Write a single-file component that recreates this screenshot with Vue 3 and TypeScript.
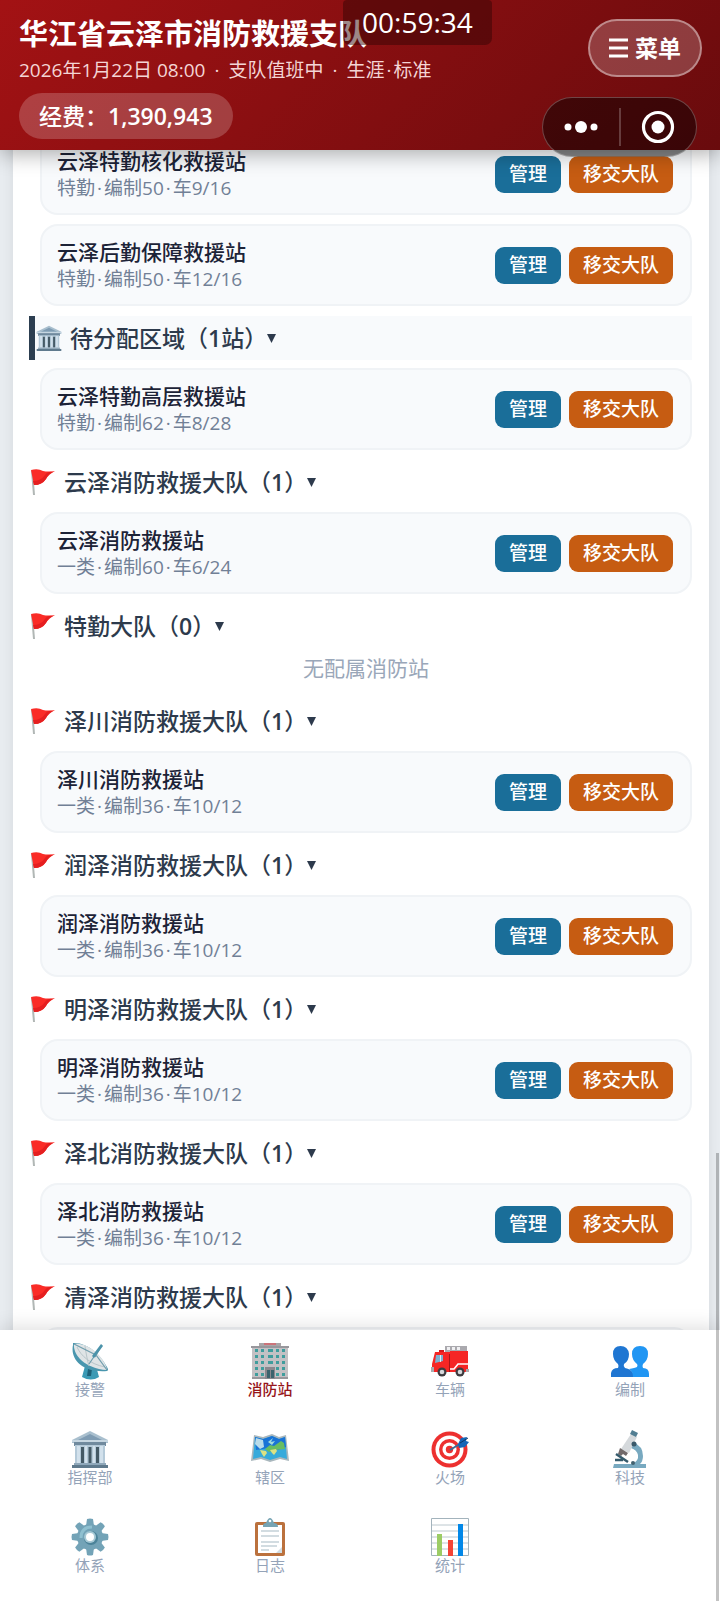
<script setup lang="ts">
import { ref } from 'vue'

interface Station {
  name: string
  kind: string
  staff: number
  vehicles: string
}

interface Group {
  title: string
  count: string
  unit?: string
  pending?: boolean
  stations: Station[]
}

const leading: Station[] = [
  { name: '云泽特勤核化救援站', kind: '特勤', staff: 50, vehicles: '9/16' },
  { name: '云泽后勤保障救援站', kind: '特勤', staff: 50, vehicles: '12/16' },
]

const brigade = (place: string, staff = 36, vehicles = '10/12'): Group => ({
  title: `${place}消防救援大队`,
  count: '1',
  stations: [{ name: `${place}消防救援站`, kind: '一类', staff, vehicles }],
})

const groups: Group[] = [
  { title: '', count: '', stations: leading },
  {
    title: '待分配区域',
    count: '1',
    unit: '站',
    pending: true,
    stations: [{ name: '云泽特勤高层救援站', kind: '特勤', staff: 62, vehicles: '8/28' }],
  },
  brigade('云泽', 60, '6/24'),
  { title: '特勤大队', count: '0', stations: [] },
  brigade('泽川'),
  brigade('润泽'),
  brigade('明泽'),
  brigade('泽北'),
  brigade('清泽'),
]

const tabs = [
  { id: 'dish', label: '接警' },
  { id: 'office', label: '消防站' },
  { id: 'truck', label: '车辆' },
  { id: 'people', label: '编制' },
  { id: 'bank', label: '指挥部' },
  { id: 'map', label: '辖区' },
  { id: 'target', label: '火场' },
  { id: 'scope', label: '科技' },
  { id: 'gear', label: '体系' },
  { id: 'board', label: '日志' },
  { id: 'chart', label: '统计' },
]
const active = ref('office')
const teeth = [0, 45, 90, 135, 180, 225, 270, 315]
</script>

<template>
  <div class="page">
    <svg class="defs" aria-hidden="true">
      <symbol id="bank" viewBox="0 0 38 38">
        <path d="M19 1 1 10v3h36v-3z" fill="#a9bfce" />
        <path d="M19 4 7 10h24z" fill="#7f9cb3" />
        <path d="M1 10h36v2H1z" fill="#c6d6e1" />
        <path d="M3 12h32v4H3z" fill="#708a9e" />
        <path d="M4 15h30v18H4z" fill="#b5cad9" />
        <path d="M10 17h3v16h-3zM17.500 17h3v16h-3zM25 17h3v16h-3z" fill="#455a66" />
        <path d="M6 16h3v17H6zM14 16h2v17h-2zM22 16h2v17h-2zM29 16h3v17h-3z" fill="#d2e1ec" />
        <path d="M3 33h32v2H3z" fill="#8fa8ba" />
        <path d="M1 35h36v3H1z" fill="#5f7a8d" />
      </symbol>
      <symbol id="dish" viewBox="0 0 38 38">
        <path d="M14 24h11l3 11q-8 5-17 0z" fill="#3b9ab5" />
        <path d="M17 27h4l-1 7h-4z" fill="#1e6279" />
        <path d="M2 3C-1 17 11 31 36 29q2-1 0-4C30 13 16 0 2 1z" fill="#4996ae" />
        <path d="M3 2c-1 10 9 24 33 26C34 15 16-1 3 2z" fill="#dfe4e6" />
        <path d="M6 5c4 9 13 17 28 20M14 4c1 7 2 13 4 20" stroke="#b9c5c9" fill="none" />
        <path d="M3 2 25 13 36 28M31 3 18 22M31 3l-7 12" stroke="#6f9dad" stroke-width="1.200" fill="none" />
        <path d="m30 2-9 12 2 2 9-12z" fill="#4b93aa" />
      </symbol>
      <symbol id="office" viewBox="0 0 38 38">
        <path d="M8 1h22v4H8z" fill="#a8a5a8" />
        <path d="M13 1h12v2H13z" fill="#cc7379" />
        <path d="M1 4h36v31H1z" fill="#c3c1c4" />
        <path d="M0 4h38v2H0zM1 35h36v2H1z" fill="#98979c" />
        <g fill="#3f9d9d">
          <path v-for="n in 5" :key="n" :d="`M4 ${n * 6 + 1}h3v3H4zm6 0h3v3h-3zm7 0h5v3h-5zm8 0h3v3h-3zm6 0h3v3h-3z`" />
        </g>
        <path d="M14 25h10v12H14z" fill="#8a888e" />
        <path d="M16 28h3v8h-3zM20 28h3v8h-3z" fill="#3b626d" />
      </symbol>
      <symbol id="truck" viewBox="0 0 38 38">
        <path d="M14 4h22v8H14z" fill="#aaa9ae" />
        <path d="M16 5h3v3h-3zM21 5h3v3h-3zM26 5h3v3h-3z" fill="#f0f0f2" />
        <path d="M8 8h5v4H8z" fill="#d6181c" />
        <path d="M4 10h15v-1h18v18q0 3-3 3H1v-8z" fill="#f52625" />
        <path d="M5 13h7v6l-8 2z" fill="#7fb1d1" />
        <path d="M9 13h1v7H9z" fill="#e2edf3" />
        <path d="M18 12h1v18h-1z" fill="#a91519" />
        <path d="M19 27h4l4-5h10" fill="none" stroke="#fff" stroke-width="1.600" />
        <path d="M0 25h3v5H0zM35 27h3v3h-3z" fill="#a9abaf" />
        <circle cx="11" cy="30" r="4.500" fill="#3d3c40" /><circle cx="11" cy="30" r="2.300" fill="#d7d9dc" />
        <circle cx="29" cy="30" r="4.500" fill="#3d3c40" /><circle cx="29" cy="30" r="2.300" fill="#d7d9dc" />
      </symbol>
      <symbol id="people" viewBox="0 0 38 38">
        <path d="M0 35V31q1-5 7-5 1-2 0-4-5-4-5-10Q2 4 9.500 4T18 12q0 7-5 10-1 2 1 4 6 1 8 5v4z" fill="#1f76d2" />
        <path d="M22 35q0-6-4-8 6-1 8-2 1-2 0-3-5-4-5-10 0-8 8-8t8 8q0 6-5 10-1 2 0 4 6 0 6 6v3z" fill="#2196f3" />
      </symbol>
      <symbol id="map" viewBox="0 0 38 38">
        <path d="m3 5 9 2 9-3 7 3 7-2 3 26-9-2-10 3-9-3-10 2z" fill="#a9b7bd" />
        <path d="m4 7 8 2 9-3 7 3 6-2 2 22-7-2-10 3-9-3-8 2z" fill="#36aadb" />
        <path d="m4 7 8 2 9-3 7 3 6-2 1 10-8 3-9-2-13 2z" fill="#1973d6" />
        <path d="m5 8 7 2 1 7-4 2-5-5z" fill="#b8dbe9" />
        <path d="m14 19 5-4 4 1 7-5 3 2 1 6-10 1-6 2z" fill="#68bd62" />
        <path d="m9 20 6 1 1 2-3 4-2-3zM19 20l6-1 1 2-3 4-2-2z" fill="#dce283" />
        <path d="m17 12 5-4-2 4 4-1-3 4z" fill="#9edbdf" />
      </symbol>
      <symbol id="target" viewBox="0 0 38 38">
        <circle cx="18.500" cy="19.500" r="18" fill="#ed302f" />
        <circle cx="18.500" cy="19.500" r="14" fill="#fff" />
        <circle cx="18.500" cy="19.500" r="10.500" fill="#ed302f" />
        <circle cx="18.500" cy="19.500" r="7" fill="#fff" />
        <circle cx="18.500" cy="19.500" r="3.700" fill="#ed302f" />
        <path d="m19 20 13-8" stroke="#376e98" stroke-width="2" />
        <path d="m27 14 3-6 6-1-1 4 3 1-4 5-6 1z" fill="#1565b7" />
        <path d="m29 13 8-5" stroke="#0b3869" />
      </symbol>
      <symbol id="scope" viewBox="0 0 38 38">
        <path d="M3 34h18q7-3 6-9-1-5-7-7l2-6q10 4 10 14 0 5-3 8h6v4H2z" fill="#78a9c0" />
        <path d="m20 4 6 3-8 16-8-4z" fill="#d5d9dc" />
        <path d="m9 18 8 5-2 3-3-2-2 2-3-2z" fill="#726a6b" />
        <path d="m21 0 6 3-2 4-6-3z" fill="#527e92" />
        <path d="m5 24 12 8M4 30h8" stroke="#365b6c" stroke-width="2.500" />
        <circle cx="23" cy="14" r="2.500" fill="#3a596a" /><circle cx="22" cy="33" r="2" fill="#41616f" />
      </symbol>
      <symbol id="gear" viewBox="0 0 38 38">
        <g fill="#73a3b7">
          <path v-for="a in teeth" :key="a" d="M15 8 16 1q3-1 6 0l1 7z" :transform="`rotate(${a} 19 19)`" />
        </g>
        <circle cx="19" cy="19" r="13" fill="#73a3b7" />
        <path d="M10 20q0-11 11-11" fill="none" stroke="#8fc0d0" stroke-width="3" />
        <circle cx="20" cy="20" r="7" fill="#4b8399" />
        <circle cx="19" cy="19" r="6" fill="#a7c9d5" />
        <circle cx="19" cy="19" r="4" fill="#fff" />
      </symbol>
      <symbol id="board" viewBox="0 0 38 38">
        <rect x="4" y="4" width="30" height="34" rx="2" fill="#bb713d" />
        <path d="M7 7h24v28H7z" fill="#fff" /><path d="m31 29-6 6h6z" fill="#d2dce1" />
        <path d="M10 13h18M10 18h18M10 24h18M10 28h16M10 32h8" stroke="#a5b9c3" />
        <path d="M12 8q0-3 3-3 2-5 4-5t4 5q4 0 4 4H12z" fill="#77a4b3" /><circle cx="19" cy="3" r="1.300" fill="#fff" />
      </symbol>
      <symbol id="chart" viewBox="0 0 38 38">
        <path d="M.500.500h37v37H.500z" fill="#fff" stroke="#a3b3bc" />
        <path d="M1 7h36M1 13h36M1 19h36M1 25h36M1 31h36" stroke="#bcc8ce" />
        <path d="M6 16h5v22H6z" fill="#9ccc65" /><path d="M17 22h5v16h-5z" fill="#f44336" /><path d="M27 6h5v32h-5z" fill="#0288e8" />
      </symbol>
      <symbol id="flag" viewBox="0 0 26 26">
        <path d="m1 2 2 24h2L3 2z" fill="#b1b7b5" />
        <path d="M1 1q7-2 12 1 5 1 12 0-6 3-9 8-4 6-12 6z" fill="#fa2c27" />
        <path d="M3 12q8 0 12-6 3-4 8-3-5 2-7 7-4 6-12 6z" fill="#e51f20" />
      </symbol>
    </svg>

    <header class="top">
      <div class="unit">
        <h1>华江省云泽市消防救援支队</h1>
        <p class="status">2026年1月22日 08:00<i>·</i>支队值班中<i>·</i>生涯<b>·</b>标准</p>
        <div class="funds">经费：<strong>1,390,943</strong></div>
      </div>
      <button class="menu" type="button">
        <svg viewBox="0 0 19 20" aria-hidden="true"><path d="M0 2h19M0 10h19M0 18h19" stroke="#fff" stroke-width="3" /></svg>
        菜单
      </button>
      <time class="clock">00:59:34</time>
      <div class="capsule">
        <button type="button" aria-label="更多">
          <svg viewBox="0 0 34 34"><circle cx="4" cy="17" r="3.500" fill="#fff" /><circle cx="17" cy="17" r="6" fill="#fff" /><circle cx="30" cy="17" r="3.500" fill="#fff" /></svg>
        </button>
        <button type="button" aria-label="关闭">
          <svg viewBox="0 0 34 34"><circle cx="17" cy="17" r="14.500" fill="none" stroke="#fff" stroke-width="3.200" /><circle cx="17" cy="17" r="6.500" fill="#fff" /></svg>
        </button>
      </div>
    </header>

    <main class="body">
      <div class="panel">
        <section v-for="g in groups" :key="g.title" class="group">
          <h2 v-if="g.title" :class="{ pending: g.pending }">
            <svg aria-hidden="true"><use :href="g.pending ? '#bank' : '#flag'" /></svg>
            <span>{{ g.title }}（<strong>{{ g.count }}</strong>{{ g.unit }}）</span>
            <svg class="caret" viewBox="0 0 9 9" aria-hidden="true"><path d="M0 0h9L4.500 9z" fill="#2d3a4c" /></svg>
          </h2>
          <article v-for="s in g.stations" :key="s.name" class="station">
            <div class="info">
              <h3>{{ s.name }}</h3>
              <p>{{ s.kind }}<b>·</b>编制{{ s.staff }}<b>·</b>车{{ s.vehicles }}</p>
            </div>
            <button class="manage" type="button">管理</button>
            <button class="move" type="button">移交大队</button>
          </article>
          <p v-if="!g.stations.length" class="empty">无配属消防站</p>
        </section>
      </div>
    </main>

    <nav class="tabs">
      <button v-for="t in tabs" :key="t.id" type="button" :class="{ on: active === t.id }" @click="active = t.id">
        <svg aria-hidden="true"><use :href="'#' + t.id" /></svg>
        <span>{{ t.label }}</span>
      </button>
    </nav>
    <div class="thumb"></div>
  </div>
</template>

<style>
body {
  margin: 0;
}
</style>

<style scoped>
* {
  box-sizing: border-box;
}
.page {
  position: relative;
  display: flex;
  flex-direction: column;
  height: 100vh;
  overflow: hidden;
  background: #e8ecf0;
  font-family: "Open Sans", "Noto Sans CJK SC", sans-serif;
}
.defs {
  position: absolute;
  width: 0;
  height: 0;
}
h1, h2, h3, p {
  margin: 0;
}
strong {
  font-weight: 600;
}
button {
  border: 0;
  padding: 0;
  font-family: inherit;
  cursor: pointer;
}
.top {
  position: relative;
  z-index: 2;
  display: flex;
  justify-content: space-between;
  align-items: flex-start;
  padding: 16px 18px 11px 19px;
  background: linear-gradient(135deg, #a31214, #690b0d);
  box-shadow: 0 4px 20px rgba(0, 0, 0, 0.32);
  color: #fff;
}
h1 {
  font-size: 29px;
  line-height: 36px;
  font-weight: 700;
  white-space: nowrap;
}
.status {
  margin-top: 4px;
  font-size: 19px;
  line-height: 28px;
  color: #f4d5d5;
  white-space: nowrap;
}
.status i {
  margin: 0 9px;
  font-style: normal;
}
.status b, .info b {
  margin: 0 2px;
  font-weight: 400;
}
.funds {
  width: fit-content;
  margin-top: 9px;
  padding: 0 20px;
  border-radius: 23px;
  background: rgba(255, 255, 255, 0.2);
  font-size: 23px;
  line-height: 46px;
  font-weight: 500;
}
.menu {
  display: flex;
  align-items: center;
  gap: 7px;
  height: 58px;
  margin-top: 3px;
  padding: 0 19px;
  border: 2px solid rgba(255, 255, 255, 0.4);
  border-radius: 29px;
  background: rgba(255, 255, 255, 0.2);
  color: #fff;
  font-size: 23px;
  line-height: 30px;
  font-weight: 700;
}
.menu svg {
  width: 19px;
  height: 20px;
}
.clock {
  position: absolute;
  top: 0;
  left: 343px;
  padding: 0 19px;
  border-radius: 4px 4px 7px 7px;
  background: rgba(50, 5, 5, 0.48);
  font-size: 28px;
  line-height: 45px;
}
.capsule {
  position: absolute;
  top: 97px;
  right: 23px;
  display: flex;
  align-items: center;
  width: 155px;
  height: 60px;
  border: 1px solid rgba(255, 255, 255, 0.25);
  border-radius: 30px;
  background: rgba(0, 0, 0, 0.46);
}
.capsule button {
  flex: 1;
  height: 38px;
  background: none;
}
.capsule button + button {
  border-left: 2px solid rgba(255, 255, 255, 0.22);
}
.capsule svg {
  display: block;
  width: 34px;
  height: 34px;
  margin: 0 auto;
}
.body {
  flex: 1;
  min-height: 0;
  overflow: hidden;
  padding: 0 11px 0 13px;
}
.panel {
  margin-top: -17px;
  padding: 0 17px 0 16px;
  background: #fff;
  box-shadow: 0 0 12px rgba(0, 0, 0, 0.08);
}
h2 {
  display: flex;
  align-items: center;
  height: 44px;
  margin: 10px 0 8px;
  color: #2d3a4c;
  font-size: 23px;
  line-height: 32px;
  font-weight: 500;
}
h2 svg {
  width: 26px;
  height: 26px;
  margin: 0 8px 0 1px;
}
h2.pending {
  border-left: 6px solid #2c3e50;
  background: #f8fafc;
}
h2 .caret {
  width: 9px;
  height: 9px;
  margin: 0;
}
.station {
  display: flex;
  align-items: center;
  gap: 8px;
  height: 82px;
  margin: 0 0 9px 11px;
  padding: 0 17px 0 15px;
  border: 2px solid #f0f3f6;
  border-radius: 18px;
  background: #f8fafc;
}
.station:last-child {
  margin-bottom: 0;
}
.info {
  flex: 1;
}
h3 {
  color: #1c2337;
  font-size: 21px;
  line-height: 28px;
  font-weight: 500;
}
.info p {
  color: #718096;
  font-size: 19px;
  line-height: 26px;
}
.station button {
  height: 37px;
  padding: 0 14px;
  border-radius: 9px;
  color: #fff;
  font-size: 19px;
  line-height: 28px;
  font-weight: 500;
}
.station .manage {
  background: #1a6e99;
}
.station .move {
  background: #c65c12;
}
.empty {
  margin-top: -8px;
  padding-left: 11px;
  color: #9aa7b9;
  font-size: 21px;
  line-height: 41px;
  text-align: center;
}
.tabs {
  position: relative;
  z-index: 2;
  display: grid;
  grid-template-columns: repeat(4, 1fr);
  padding-bottom: 7px;
  background: #fff;
  box-shadow: 0 -3px 18px rgba(0, 0, 0, 0.13);
}
.tabs button {
  display: flex;
  flex-direction: column;
  align-items: center;
  height: 88px;
  padding-top: 12px;
  background: none;
  color: #94a3b8;
  font-size: 15px;
  line-height: 18px;
}
.tabs .on {
  color: #96151a;
  font-weight: 500;
}
.tabs svg {
  width: 38px;
  height: 38px;
}
.thumb {
  position: absolute;
  z-index: 3;
  right: 1px;
  bottom: 0;
  width: 3px;
  height: 28%;
  background: rgba(0, 0, 0, 0.24);
}
</style>
